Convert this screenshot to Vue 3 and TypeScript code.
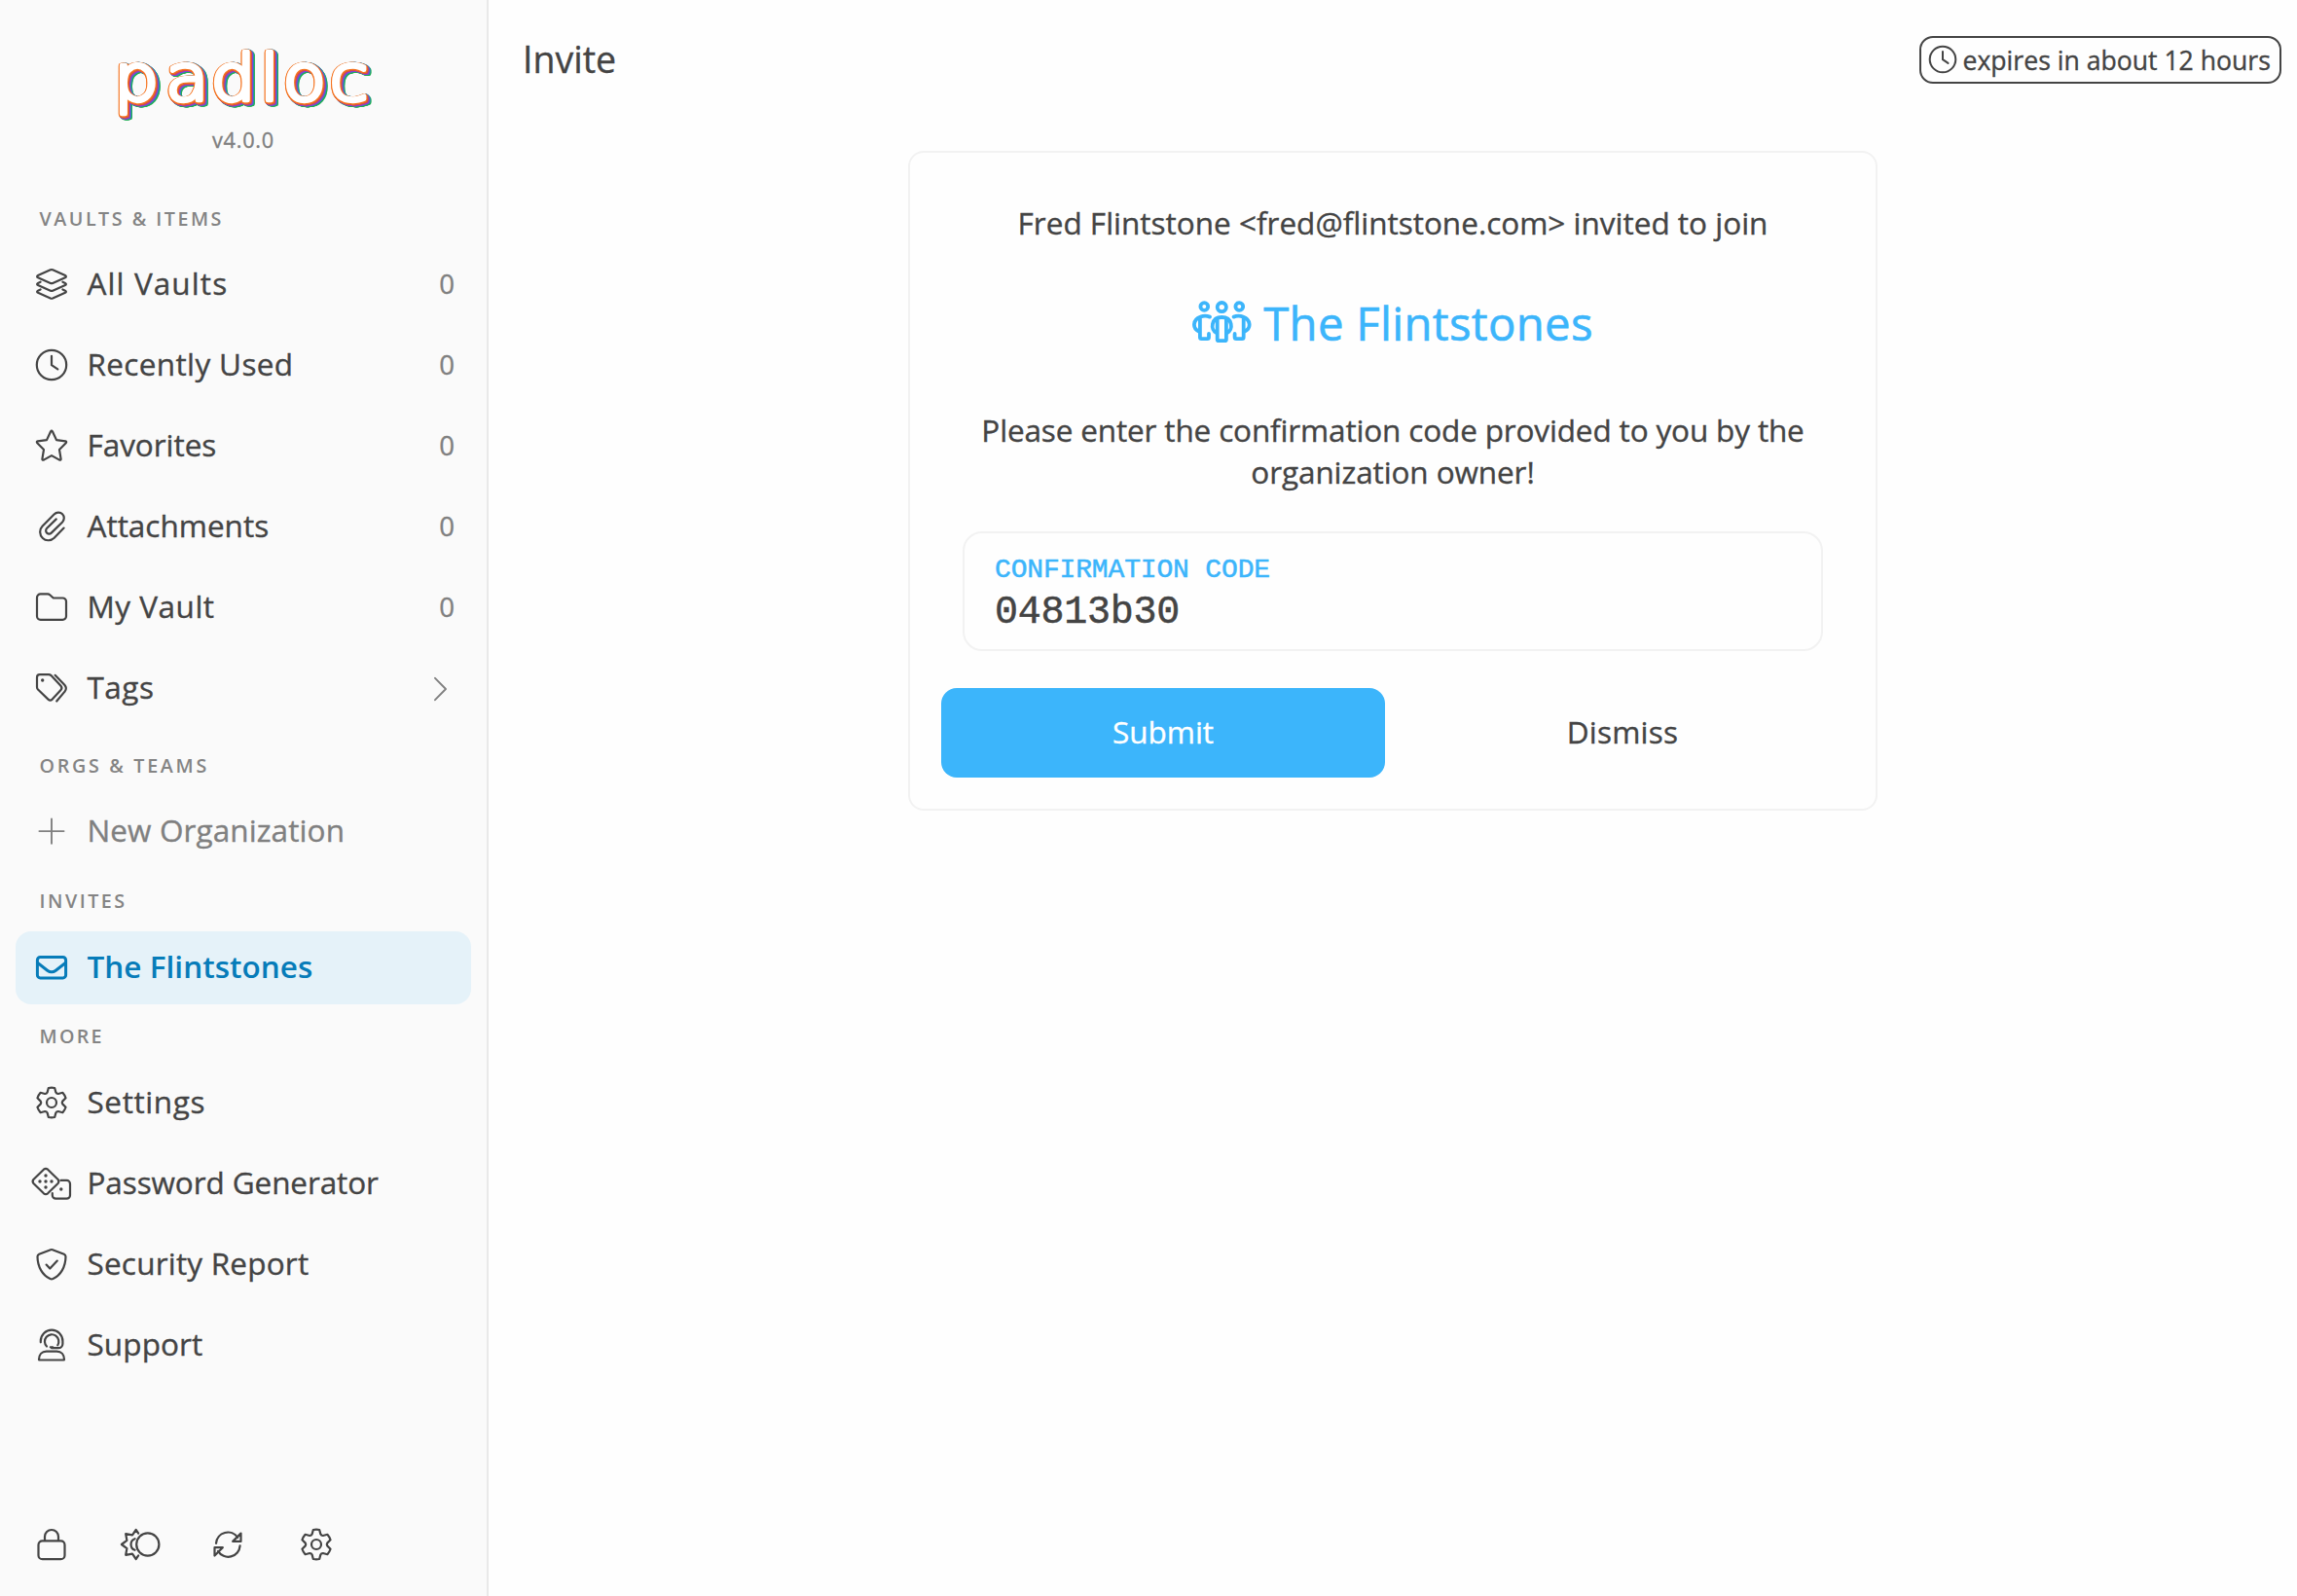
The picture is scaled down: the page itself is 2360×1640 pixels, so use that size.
<script setup lang="ts">
import { ref } from 'vue'

interface NavItem {
  label: string
  icon: string
  spacing: number
  count?: number
  chevron?: boolean
  muted?: boolean
  selected?: boolean
}

interface NavGroup {
  title: string
  key: string
  spacing: number
  items: NavItem[]
}

interface Icon {
  w: number
  paths: string[]
  dots?: [number, number][]
}

// Cog outline: six teeth around the centre of a 32x32 box, plus the hub.
function cog(): string {
  const pt = (r: number, deg: number): string => {
    const a = (deg * Math.PI) / 180
    return `${(16 + r * Math.cos(a)).toFixed(2)} ${(16 + r * Math.sin(a)).toFixed(2)}`
  }
  let d = ''
  for (let k = 0; k < 6; k++) {
    const t = -90 + 60 * k
    d += `${k ? 'L' : 'M'}${pt(11.3, t - 23)}L${pt(15.3, t - 12)}Q${pt(15.6, t)} ${pt(15.3, t + 12)}L${pt(11.3, t + 23)}Q${pt(10.3, t + 30)} ${pt(11.3, t + 37)}`
  }
  return `${d}Z M21 16a5 5 0 1 1-10 0 5 5 0 0 1 10 0z`
}

const icons: Record<string, Icon> = {
  layers: {
    w: 32,
    paths: [
      'M14.8 1.3 2 7.1c-1.2.6-1.2 1.6 0 2.1l12.8 5.7q1.2.5 2.4 0L30 9.2c1.2-.5 1.2-1.5 0-2.1L17.2 1.3q-1.2-.5-2.4 0z',
      'M4.6 13.7 2 14.9c-1.2.6-1.2 1.6 0 2.1l12.8 5.7q1.2.5 2.4 0L30 17c1.2-.5 1.2-1.5 0-2.1l-2.6-1.2',
      'M4.6 21.5 2 22.7c-1.2.6-1.2 1.6 0 2.1l12.8 5.7q1.2.5 2.4 0L30 24.8c1.2-.5 1.2-1.5 0-2.1l-2.6-1.2',
    ],
  },
  clock: { w: 32, paths: ['M31.2 16a15.2 15.2 0 1 1-30.4 0 15.2 15.2 0 0 1 30.4 0z', 'M16 6.8v9.4l6.3 4.2'] },
  star: {
    w: 32,
    paths: [
      'M15 1.5q1-1.6 2 0l4 8.6 9.2 1.3q1.7.5.5 1.9l-6.7 6.7 1.6 9.6q.1 1.6-1.5 1L16 26.1l-8.1 4.5q-1.6.6-1.5-1L8 20 1.3 13.3q-1.2-1.4.5-1.9L11 10.1z',
    ],
  },
  clip: {
    w: 32,
    paths: ['M28.6 17.6 18.7 27.7C15.6 30.7 10.3 31.4 6.9 28 3.3 24.5 3.3 19 6.5 15.7L18.6 3.5c2.4-2.4 6.2-2.6 8.5-.3s2.2 6 0 8.3L16 22.4c-1.5 1.5-3.6 1.4-4.9.2s-1.3-3.4.1-4.8l9.6-9.4'],
  },
  folder: { w: 32, paths: ['M1 6a3.6 3.6 0 0 1 3.6-3.6H12q1.3 0 2.2.8L17.8 6.5h9.6A3.6 3.6 0 0 1 31 10.1v15.2a3.6 3.6 0 0 1-3.6 3.6H4.6A3.6 3.6 0 0 1 1 25.3z'] },
  tags: {
    w: 32,
    paths: [
      'M1 5A2.8 2.8 0 0 1 3.8 2.2H13q1.5 0 2.5.9L25.5 13.8q1.9 2.2 0 4.3l-8.8 9.5q-2.1 2-4.2 0L2 17.5Q1 16.4 1 15z',
      'M19.6 2.8l9.7 9.9q3.2 3.6 0 7.2L21.2 29.5',
    ],
    dots: [[6.7, 8]],
  },
  cog: { w: 32, paths: [cog()] },
  plus: { w: 32, paths: ['M16 3.5v25.2M3.4 16.1h25.2'] },
  mail: {
    w: 32,
    paths: ['M4.4 5.5h23.2a3 3 0 0 1 3 3v15.4a3 3 0 0 1-3 3H4.4a3 3 0 0 1-3-3V8.5a3 3 0 0 1 3-3z', 'M1.8 11.5l9.9 7.7q4.3 3.2 8.6 0l9.9-7.7'],
  },
  dice: {
    w: 40,
    paths: [
      'M11.9 1.7q2.1-1.6 4.2 0L26.6 12q1.6 2 0 4L16.1 26.3q-2.1 1.6-4.2 0L1.4 16q-1.6-2 0-4z',
      'M29.5 12.9h6A3.5 3.5 0 0 1 39 16.4v11.8a3.5 3.5 0 0 1-3.5 3.5H24.3a3.5 3.5 0 0 1-3.5-3.5V26',
    ],
    dots: [[14, 14], [8, 14], [20, 14], [14, 8], [14, 20], [29.8, 22]],
  },
  shield: {
    w: 32,
    paths: [
      'M15 1.2q1-.4 2 0l11.8 4.6q1.7.8 1.7 2.5C30.4 19 25.2 27.5 17.5 31q-1.5.6-3 0C6.8 27.5 1.6 19 1.5 8.3q0-1.7 1.7-2.5z',
      'M10.6 16.6l3.7 3.9 7.5-7.9',
    ],
  },
  support: {
    w: 32,
    paths: [
      'M4.8 13.3V12a11.3 11.3 0 0 1 22.6 0v3a4.3 4.3 0 0 1-4.3 4.2h-7',
      'M11 17.5a7.2 7.2 0 1 1 11.3-1.3',
      'M14.8 18.3h2.4',
      'M3 31.1c0-5 3-8.5 7.7-8.5h10.6c4.7 0 7.7 3.5 7.7 8.5q0 .4-.5.4h-25q-.5 0-.5-.4z',
    ],
  },
  lock: { w: 32, paths: ['M6.5 12.4h19a4 4 0 0 1 4 4v10.8a4 4 0 0 1-4 4h-19a4 4 0 0 1-4-4V16.4a4 4 0 0 1 4-4z', 'M9 12V8a7 7 0 0 1 14 0v4'] },
  theme: {
    w: 40,
    paths: [
      'M39.4 16a11.6 11.6 0 1 1-23.2 0 11.6 11.6 0 0 1 23.2 0z',
      'M18.2 4.6 15.7 1 12 6.3 5.2 5.2l1.2 6.7L.9 16l5.5 4.1-1.2 6.7 6.8-1.1L15.7 31l2.5-3.6',
      'M14.6 10.2c-5.4 1.6-5.4 10 0 11.6',
    ],
  },
  refresh: {
    w: 34,
    paths: ['M4 14.8A12.2 12.2 0 0 1 26.2 8.9', 'M29.5 4.6v8.3h-8.3z', 'M28.6 17.4A12.2 12.2 0 0 1 6 22.9', 'M2.5 27.5v-8.3h8.3z'],
  },
}

const groups: NavGroup[] = [
  {
    title: 'Vaults & Items',
    key: 'vaults',
    spacing: 2.5,
    items: [
      { label: 'All Vaults', icon: 'layers', spacing: 1.1, count: 0 },
      { label: 'Recently Used', icon: 'clock', spacing: 0.36, count: 0 },
      { label: 'Favorites', icon: 'star', spacing: -0.05, count: 0 },
      { label: 'Attachments', icon: 'clip', spacing: 0, count: 0 },
      { label: 'My Vault', icon: 'folder', spacing: 0.5, count: 0 },
      { label: 'Tags', icon: 'tags', spacing: 0.5, chevron: true },
    ],
  },
  { title: 'Orgs & Teams', key: 'orgs', spacing: 2.7, items: [{ label: 'New Organization', icon: 'plus', spacing: 0.1, muted: true }] },
  { title: 'Invites', key: 'invites', spacing: 2.5, items: [{ label: 'The Flintstones', icon: 'mail', spacing: 0.03, selected: true }] },
  {
    title: 'More',
    key: 'more',
    spacing: 2.3,
    items: [
      { label: 'Settings', icon: 'cog', spacing: 0.59 },
      { label: 'Password Generator', icon: 'dice', spacing: -0.1 },
      { label: 'Security Report', icon: 'shield', spacing: 0.2 },
      { label: 'Support', icon: 'support', spacing: 0.1 },
    ],
  },
]

const tools = ['lock', 'theme', 'refresh', 'cog']

const code = ref('04813b30')
</script>

<template>
  <div class="app">
    <aside class="sidebar">
      <header class="brand">
        <svg class="logo" width="300" height="100" viewBox="0 0 300 100">
          <text transform="scale(1.1 1)" x="15.400 63.600 105.900 151.800 173.200 216.800" y="73.500">padloc</text>
        </svg>
        <div class="version">v4.0.0</div>
      </header>

      <nav>
        <section v-for="g in groups" :key="g.key" :class="['group', g.key]">
          <h2 :style="{ letterSpacing: g.spacing + 'px' }">{{ g.title }}</h2>
          <ul>
            <li v-for="item in g.items" :key="item.label" :class="{ muted: item.muted, selected: item.selected }">
              <span class="slot">
                <svg class="icon" :width="icons[item.icon].w" height="32" :viewBox="`0 0 ${icons[item.icon].w} 32`">
                  <path v-for="p in icons[item.icon].paths" :key="p" :d="p" />
                  <circle v-for="(d, i) in icons[item.icon].dots || []" :key="i" class="dot" :cx="d[0]" :cy="d[1]" r="1.7" />
                </svg>
              </span>
              <span class="label" :style="{ letterSpacing: item.spacing + 'px' }">{{ item.label }}</span>
              <span v-if="item.count !== undefined" class="count">{{ item.count }}</span>
              <svg v-if="item.chevron" class="icon chevron" width="16" height="28" viewBox="0 0 16 28">
                <path d="M2 2.800 13 14 2 25.200" />
              </svg>
            </li>
          </ul>
        </section>
      </nav>

      <footer class="tools">
        <span v-for="t in tools" :key="t" class="tool">
          <svg class="icon" :width="icons[t].w" height="32" :viewBox="`0 0 ${icons[t].w} 32`">
            <path v-for="p in icons[t].paths" :key="p" :d="p" />
          </svg>
        </span>
      </footer>
    </aside>

    <main class="main">
      <header class="topbar">
        <h1>Invite</h1>
        <div class="badge">
          <svg class="icon" width="28" height="28" viewBox="0 0 32 32">
            <path v-for="p in icons.clock.paths" :key="p" :d="p" />
          </svg>
          <span>expires in about 12 hours</span>
        </div>
      </header>

      <section class="card">
        <p class="from">Fred Flintstone &lt;fred@flintstone.com&gt; invited to join</p>
        <div class="org">
          <svg class="people" width="61" height="44" viewBox="0 0 61 44">
            <circle cx="12.300" cy="6" r="3.900" />
            <circle cx="30.300" cy="6.600" r="4.600" />
            <circle cx="48.300" cy="6" r="3.900" />
            <path d="M18 16.600Q13 14.700 8.500 16.600C.3 19.500-.2 28.500 7 31.800M7.900 17V37.600Q7.900 39.200 9.500 39.200H15.400Q17 39.200 17 37.600V34" />
            <path d="M42.600 16.600q5-1.900 9.500 0c8.200 2.900 8.700 11.900 1.500 15.200M52.700 17V37.600q0 1.600-1.600 1.600H45.200q-1.600 0-1.600-1.600V34" />
            <path d="M25 33.200C18 30 19.300 17 30.300 17S42.600 30 35.600 33.200M25.700 18.500V39.700q0 1.500 1.500 1.500h6.200q1.500 0 1.500-1.500V18.500" />
          </svg>
          <span>The Flintstones</span>
        </div>
        <p class="hint">
          <span>Please enter the confirmation code provided to you by the</span><br />
          <span class="second">organization owner!</span>
        </p>
        <div class="field">
          <div class="field-label">Confirmation Code</div>
          <div class="field-value">{{ code }}</div>
        </div>
        <div class="actions">
          <button class="primary">Submit</button>
          <button class="plain">Dismiss</button>
        </div>
      </section>
    </main>
  </div>
</template>

<style>
html,
body {
  margin: 0;
  background: #fff;
}
</style>

<style scoped>
.app {
  display: flex;
  width: 2360px;
  height: 1640px;
  overflow: hidden;
  background: #fefefe;
  color: #444;
  font: 31.5px/44px 'Open Sans', 'Noto Sans', sans-serif;
  -webkit-text-stroke: 0.35px currentColor;
}
.sidebar {
  box-sizing: border-box;
  width: 502px;
  height: 1640px;
  flex: none;
  display: flex;
  flex-direction: column;
  background: #fafafa;
  border-right: 2px solid #e9e9e9;
}
.brand {
  height: 190px;
  padding-top: 30px;
  box-sizing: border-box;
  display: flex;
  flex-direction: column;
  align-items: center;
}
/* Orange rim first, then the coloured extrusion towards the lower right. */
.logo {
  display: block;
  overflow: visible;
  filter: drop-shadow(1px 0 0 #f5731f) drop-shadow(-1px 0 0 #f5731f) drop-shadow(0 1px 0 #f5731f)
    drop-shadow(1px 1px 0 #d9503f) drop-shadow(1px 1px 0 #8a3fd1) drop-shadow(1px 0 0 #2f86b8)
    drop-shadow(1px 1px 0 #1fae54);
}
/* Light letters thickened by a round stroke. */
.logo text {
  font-family: 'DejaVu Sans', sans-serif;
  font-size: 66px;
  font-weight: 200;
  fill: #fff;
  stroke: #fff;
  stroke-width: 4.4px;
  -webkit-text-stroke: 4.4px #fff;
  stroke-linejoin: round;
}
.version {
  margin-top: -1.5px;
  font-size: 21.7px;
  line-height: 30px;
  letter-spacing: 0.75px;
  color: #808080;
}
h2 {
  box-sizing: border-box;
  height: 65px;
  margin: 0;
  padding: 3px 0 0 40.5px;
  font-size: 19.7px;
  line-height: 63px;
  font-weight: 600;
  color: #848484;
  text-transform: uppercase;
  -webkit-text-stroke: 0;
}
.group.orgs h2 {
  margin-top: 7px;
}
.group.invites h2 {
  line-height: 61px;
}
.group.more h2 {
  height: 64px;
  line-height: 59px;
}
ul {
  margin: 0;
  padding: 0 16px;
  list-style: none;
  display: flex;
  flex-direction: column;
  gap: 8px;
}
li {
  height: 75px;
  display: flex;
  align-items: center;
  border-radius: 16px;
  padding: 0 17px 0 16.7px;
}
.slot {
  width: 40px;
  flex: none;
  display: flex;
  justify-content: center;
  padding-bottom: 1px;
}
.icon {
  display: block;
  overflow: visible;
  fill: none;
  stroke: currentColor;
  stroke-width: 2.2;
  stroke-linecap: round;
  stroke-linejoin: round;
}
.dot {
  fill: currentColor;
  stroke: none;
}
.label {
  flex: 1;
  margin-left: 16.8px;
  padding-bottom: 3px;
  white-space: nowrap;
}
.count {
  padding-bottom: 4px;
  font-size: 27.6px;
  color: #808080;
}
.chevron {
  margin-right: 6px;
  color: #808080;
  stroke-width: 1.9;
}
.muted {
  color: #808080;
}
.muted .icon {
  stroke-width: 1.9;
}
.selected {
  background: #e5f2f9;
  color: #077cb9;
  font-weight: 600;
  -webkit-text-stroke: 0;
}
.selected .icon {
  stroke-width: 3;
}
.tools {
  margin-top: auto;
  height: 106px;
  padding-left: 8px;
  display: flex;
  align-items: center;
}
.tool {
  width: 90.7px;
  display: flex;
  justify-content: center;
}
.main {
  flex: 1;
  display: flex;
  flex-direction: column;
}
.topbar {
  height: 155px;
  box-sizing: border-box;
  padding: 37px 16px 0 35px;
  display: flex;
  justify-content: space-between;
  align-items: flex-start;
}
h1 {
  margin: 0;
  font-size: 37.5px;
  line-height: 48px;
  font-weight: 400;
}
.badge {
  box-sizing: border-box;
  width: 372px;
  height: 49px;
  padding-left: 7.5px;
  border: 2px solid #444;
  border-radius: 14px;
  display: flex;
  align-items: center;
  gap: 7px;
  font-size: 26.6px;
  line-height: 42px;
  white-space: nowrap;
}
.badge .icon {
  margin-bottom: 2px;
  stroke-width: 2.3;
}
.badge span {
  padding-bottom: 0;
}
.card {
  box-sizing: border-box;
  width: 996px;
  height: 678px;
  align-self: center;
  border: 2px solid #f2f2f2;
  border-radius: 16px;
  padding: 0 32px;
  display: flex;
  flex-direction: column;
  text-align: center;
}
.from {
  margin: 50px 0 0;
  white-space: nowrap;
}
.org {
  margin-top: 51px;
  height: 60px;
  display: flex;
  justify-content: center;
  align-items: center;
  gap: 12px;
  color: #3cb5fb;
  font-size: 47.3px;
  line-height: 60px;
  letter-spacing: 0.3px;
  -webkit-text-stroke-width: 0.6px;
}
.people {
  display: block;
  margin-bottom: 2px;
  fill: none;
  stroke: currentColor;
  stroke-width: 3.8;
  stroke-linecap: round;
  stroke-linejoin: round;
}
.org span {
  -webkit-text-stroke-color: #3cb5fb;
}
.hint {
  margin: 58px 0 0;
  line-height: 43.2px;
  letter-spacing: -0.15px;
  white-space: nowrap;
}
.hint .second {
  letter-spacing: -0.1px;
}
.field {
  box-sizing: border-box;
  height: 123px;
  margin: 39.6px 22px 0;
  border: 2px solid #f2f2f2;
  border-radius: 20px;
  padding: 20px 31px 0;
  text-align: left;
  font-family: 'Liberation Mono', monospace;
  -webkit-text-stroke-width: 0.5px;
}
.field-label {
  color: #3cb5fb;
  -webkit-text-stroke-color: #3cb5fb;
  font-size: 28px;
  line-height: 36px;
  letter-spacing: -0.16px;
  text-transform: uppercase;
}
.field-value {
  font-size: 40px;
  line-height: 52px;
  letter-spacing: -0.24px;
}
.actions {
  margin-top: 38px;
  display: flex;
  gap: 16px;
}
button {
  flex: 1;
  height: 92px;
  padding: 0 0 3px;
  border: 0;
  border-radius: 16px;
  font: inherit;
  color: inherit;
  background: transparent;
}
.primary {
  background: #3cb5fb;
  color: #fff;
  -webkit-text-stroke-color: #fff;
}
.plain {
  letter-spacing: 0.25px;
}
.version,
.count,
.muted .label {
  -webkit-text-stroke-color: #808080;
}
</style>
